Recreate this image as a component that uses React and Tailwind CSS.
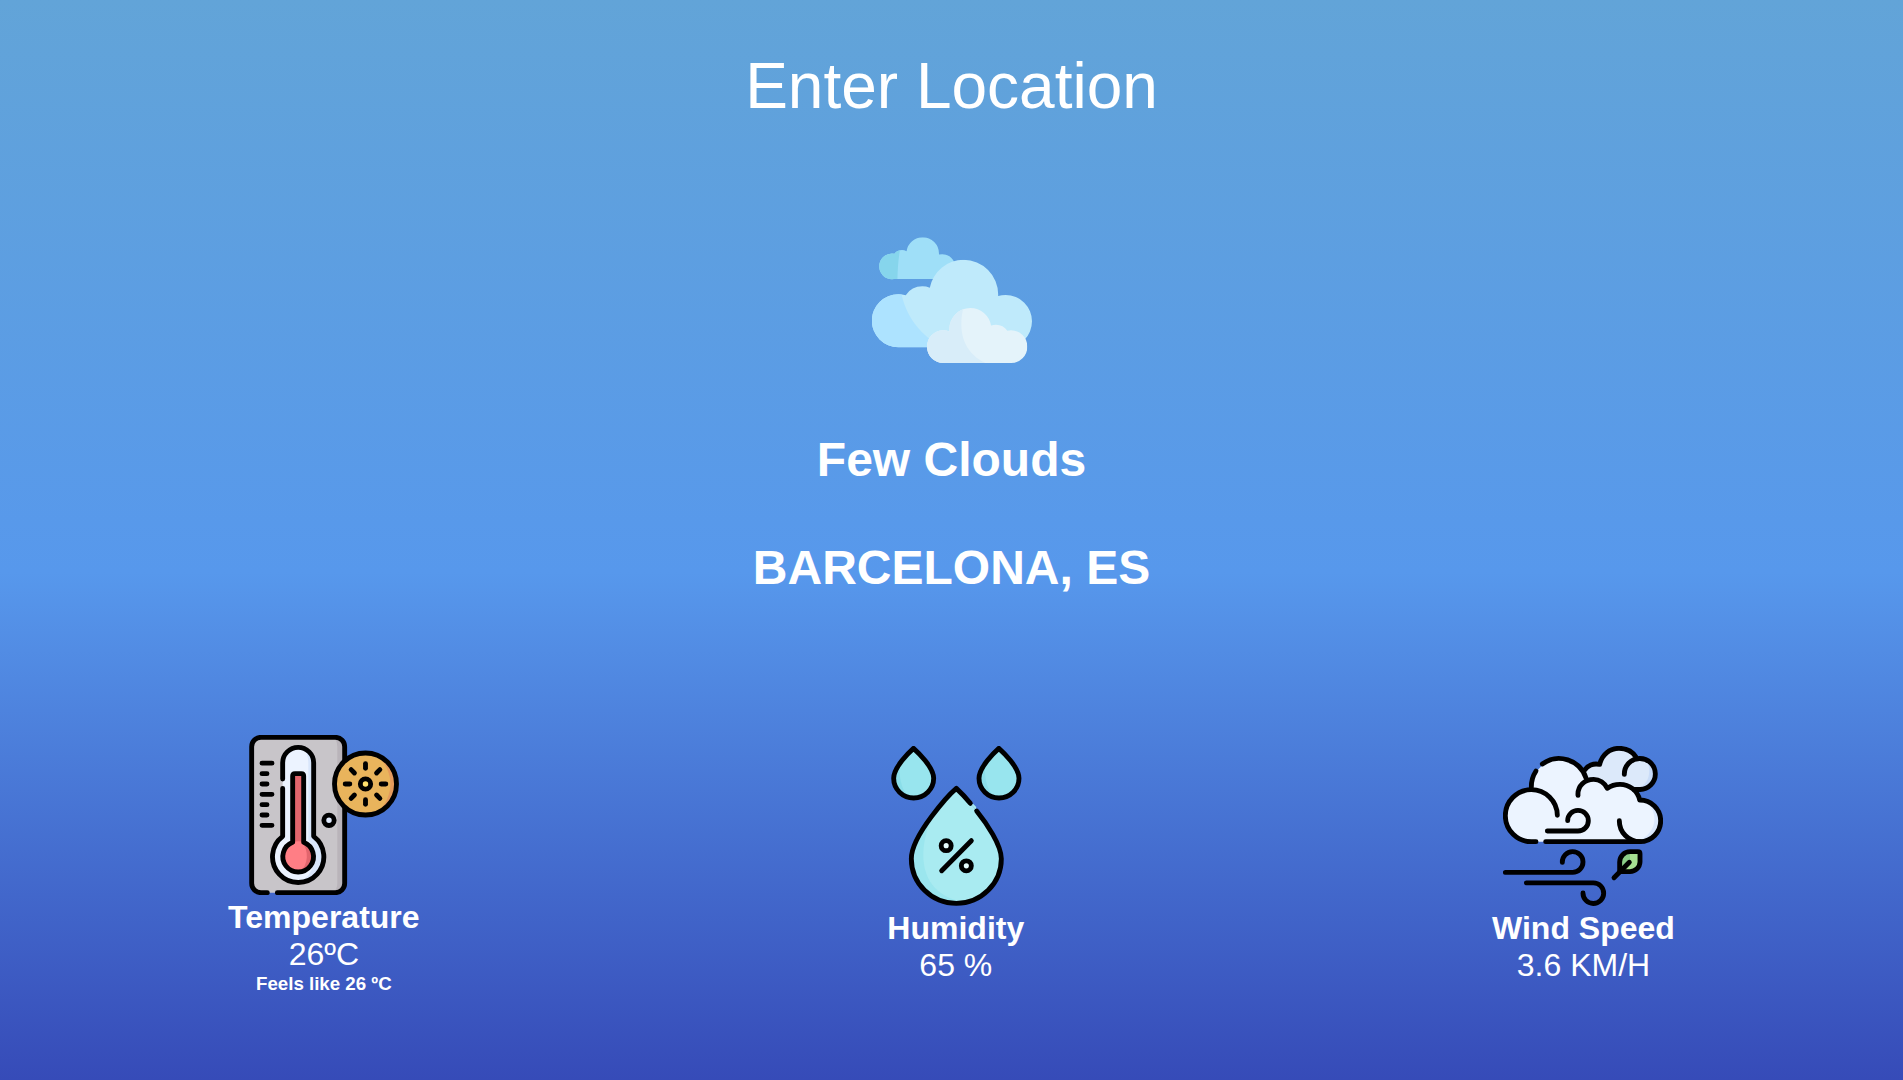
const line = {
  fill: 'none',
  stroke: '#000',
  strokeWidth: 14.6,
  strokeLinecap: 'round',
  strokeLinejoin: 'round',
}

function CloudsIcon() {
  return (
    <svg className="block size-40" viewBox="36 -16 480 480">
      <defs>
        <clipPath id="backCloud">
          <circle cx="96" cy="123" r="38.5" />
          <circle cx="126" cy="103" r="29" />
          <circle cx="188" cy="85" r="49" />
          <circle cx="247" cy="125" r="38.5" />
          <rect x="96" y="95" width="151" height="66" />
        </clipPath>
        <clipPath id="midCloud">
          <circle cx="115" cy="286" r="79.5" />
          <circle cx="187" cy="243" r="60" />
          <circle cx="311" cy="207" r="103.5" />
          <circle cx="437" cy="288" r="79" />
          <rect x="115" y="240" width="322" height="125.5" />
        </clipPath>
        <clipPath id="frontCloud">
          <circle cx="250" cy="364" r="49" />
          <circle cx="331" cy="311" r="63" />
          <circle cx="408" cy="339" r="41" />
          <circle cx="453" cy="364" r="49" />
          <rect x="250" y="330" width="203" height="83" />
        </clipPath>
      </defs>
      <g clipPath="url(#backCloud)">
        <rect x="50" y="30" width="250" height="140" fill="#9fdff8" />
        <path d="M50 30H128C118 75 113 115 112 170H50Z" fill="#86d5ec" />
      </g>
      <g clipPath="url(#midCloud)">
        <rect x="30" y="100" width="490" height="270" fill="#bfeafb" />
        <path d="M30 190H122C130 250 162 310 225 352V370H30Z" fill="#ade3ff" />
      </g>
      <g clipPath="url(#frontCloud)">
        <rect x="200" y="240" width="310" height="180" fill="#e4f3fa" />
        <path d="M200 240H312C293 310 305 380 378 414V420H200Z" fill="#d8edf9" />
      </g>
    </svg>
  )
}

function TemperatureIcon() {
  const rays = [0, 45, 90, 135, 180, 225, 270, 315]
  return (
    <svg className="block size-40" viewBox="72 30 480 480">
      <rect x="95" y="37" width="279" height="466" rx="28" fill="#c8c5c9" />
      <path d="M338 37H346a28 28 0 0 1 28 28V475a28 28 0 0 1-28 28H338q14-8 14-28V65q0-20-14-28Z" fill="#b9b4ba" />
      <path d="M188 334V113.500a46.500 46.500 0 0 1 93 0V334A77 77 0 1 1 188 334Z" fill="#ecf3ff" />
      <path d="M248 69a46.500 46.500 0 0 1 33 44.500V334A77 77 0 0 1 235 472C285 455 300 380 265 345V113.500Q265 85 248 69Z" fill="#d9e6fb" />
      <path d="M218 352V153q0-7 7-7h19q7 0 7 7V352Z" fill="#e2656d" />
      <circle cx="235" cy="395" r="46" fill="#ff7e85" />
      <path d="M251 352A46 46 0 0 1 240 441C265 420 268 375 245 350Z" fill="#e2656d" />
      <g {...line}>
        <path d="M142 503H123a28 28 0 0 1-28-28V65a28 28 0 0 1 28-28H346a28 28 0 0 1 28 28V475a28 28 0 0 1-28 28H172" />
        <path d="M188 162V113.500a46.500 46.500 0 0 1 93 0V334A77 77 0 1 1 188 334V190" />
        <path d="M218 352V153q0-7 7-7h19q7 0 7 7V352A46 46 0 1 1 218 352Z" />
        <path d="M126 114.500H156M126 146H141M126 177H141M126 208H156M126 239H141M126 270H141M126 301H156" />
        <circle cx="327" cy="286" r="15.500" fill="#dfe9fb" />
      </g>
      <circle cx="436.500" cy="177" r="93" fill="#e9b45c" />
      <path d="M470 90A93 93 0 0 1 470 264C525 215 525 139 470 90Z" fill="#e49a5c" />
      <g {...line}>
        <circle cx="436.500" cy="177" r="93" />
        <circle cx="436.500" cy="177" r="15.500" fill="#ffe06c" />
        {rays.map((a) => (
          <path key={a} d="M483.500 177H497.500" transform={`rotate(${a} 436.500 177)`} />
        ))}
      </g>
    </svg>
  )
}

function SmallDrop() {
  const shape = 'M130.500 40C118 51 71 97 71 130a60 59 0 0 0 120 0C191 97 143 51 130.500 40Z'
  return (
    <>
      <path d={shape} fill="#98e5ee" />
      <path d="M71 130A60 59 0 0 0 120 187C98 170 88 140 88 92C78 106 71 118 71 130Z" fill="#8bdee9" />
      <path d={shape} {...line} />
    </>
  )
}

function HumidityIcon() {
  return (
    <svg className="block size-40" viewBox="18 33 480 480">
      <SmallDrop />
      <g transform="translate(256 0)">
        <SmallDrop />
      </g>
      <path d="M259 160C240 176 124 300 124 371a135 134 0 0 0 270 0C394 330 350 262 320 228L301 205Z" fill="#a9ebf1" />
      <path d="M184 248C155 290 124 335 124 371A135 134 0 0 0 290 502C180 490 125 400 184 248Z" fill="#9be6ee" />
      <path d="M301 205L310 207L318 215L320 228Z" fill="#a9ebf1" />
      <g {...line}>
        <path d="M301 205C285 185 270 170 259 160C240 176 124 300 124 371a135 134 0 0 0 270 0C394 330 350 265 320 228" />
        <path d="M215 407L304 317" />
        <circle cx="228.500" cy="332" r="15" fill="#e6fcfd" />
        <circle cx="289" cy="392.500" r="15" fill="#e6fcfd" />
      </g>
    </svg>
  )
}

function WindIcon() {
  return (
    <svg className="block size-40" viewBox="69 33 480 480">
      <path d="M312 108C322 92 338 84 360 88C366 60 388 40 417 40C438 40 458 50 468 71A47 47 0 1 1 479 163H330Z" fill="#dce9fa" />
      <path d="M500 76A47 47 0 0 1 479 163H468C510 150 515 105 500 76Z" fill="#c9dcf8" />
      <path d="M155 320A78.500 78.500 0 0 1 154 163A85 85 0 0 1 318 128L341 133C358 133 374 144 382 160C394 151 408 148 420 148C448 148 474 168 480 195A62 62 0 0 1 480 320Z" fill="#ecf4ff" />
      <path d="M497 198A62 62 0 0 1 480 320H468C530 300 540 235 497 198Z" fill="#d9e7fc" />
      <path d="M480 350H450A31 31 0 0 0 419 381V410H450A30 30 0 0 0 480 381Z" fill="#a6e092" />
      <path d="M450 350A31 31 0 0 0 419 381V410L450 380Z" fill="#8bcf88" />
      <g {...line}>
        <path d="M314 105C322 91 340 84 359 88C366 58 390 40 417 40C439 40 457 49 468 66" />
        <path d="M433 118A46.500 46.500 0 1 1 480 163.500H462" />
        <path d="M232 241A78 78 0 1 0 155 320H168" />
        <path d="M154 157A85 85 0 0 1 168 108" />
        <path d="M187 87A85 85 0 0 1 318 129" />
        <path d="M294 181C292 152 315 133 341 133C358 133 374 144 382 160C394 151 408 148 420 148C448 148 473 167 479 195A62.500 62.500 0 0 1 480 320H197" />
        <path d="M418 257A62.500 62.500 0 0 0 480 320" />
        <path d="M263 257A31 31 0 1 1 294 288H202" />
        <path d="M247 382A31 31 0 1 1 278 412H76" />
        <path d="M139 443.500H340A31 31 0 1 1 309 474" />
        <path d="M474 350H450A31 31 0 0 0 419 381V410H450A30 30 0 0 0 480 381V356Q480 350 474 350Z" />
        <path d="M448 382L402 428" />
      </g>
    </svg>
  )
}

function Stat({ icon, label, value, note }) {
  return (
    <section className="flex flex-col items-center">
      {icon}
      <h2 className="mt-1 text-[32px] leading-[37px] font-bold">{label}</h2>
      <p className="text-[32px] leading-[37px]">{value}</p>
      {note && <h3 className="text-[18.72px] leading-[22px] font-bold">{note}</h3>}
    </section>
  )
}

export default function App() {
  return (
    <main className="flex h-screen flex-col items-center overflow-hidden bg-[linear-gradient(180deg,#62a4d8_0%,#5798ec_53%,#364bb8_100%)] pt-[50px] font-['Liberation_Sans',Arial,sans-serif] text-white">
      <h1 className="text-[64px] leading-[73px]">Enter Location</h1>
      <div className="mt-[97px]">
        <CloudsIcon />
      </div>
      <h2 className="mt-[52px] text-[48px] leading-[55px] font-bold">Few Clouds</h2>
      <h2 className="mt-[53px] text-[48px] leading-[55px] font-bold">BARCELONA, ES</h2>
      <div className="mt-[140px] flex w-full items-center justify-around">
        <Stat icon={<TemperatureIcon />} label="Temperature" value="26ºC" note="Feels like 26 ºC" />
        <Stat icon={<HumidityIcon />} label="Humidity" value="65 %" />
        <Stat icon={<WindIcon />} label="Wind Speed" value="3.6 KM/H" />
      </div>
    </main>
  )
}
